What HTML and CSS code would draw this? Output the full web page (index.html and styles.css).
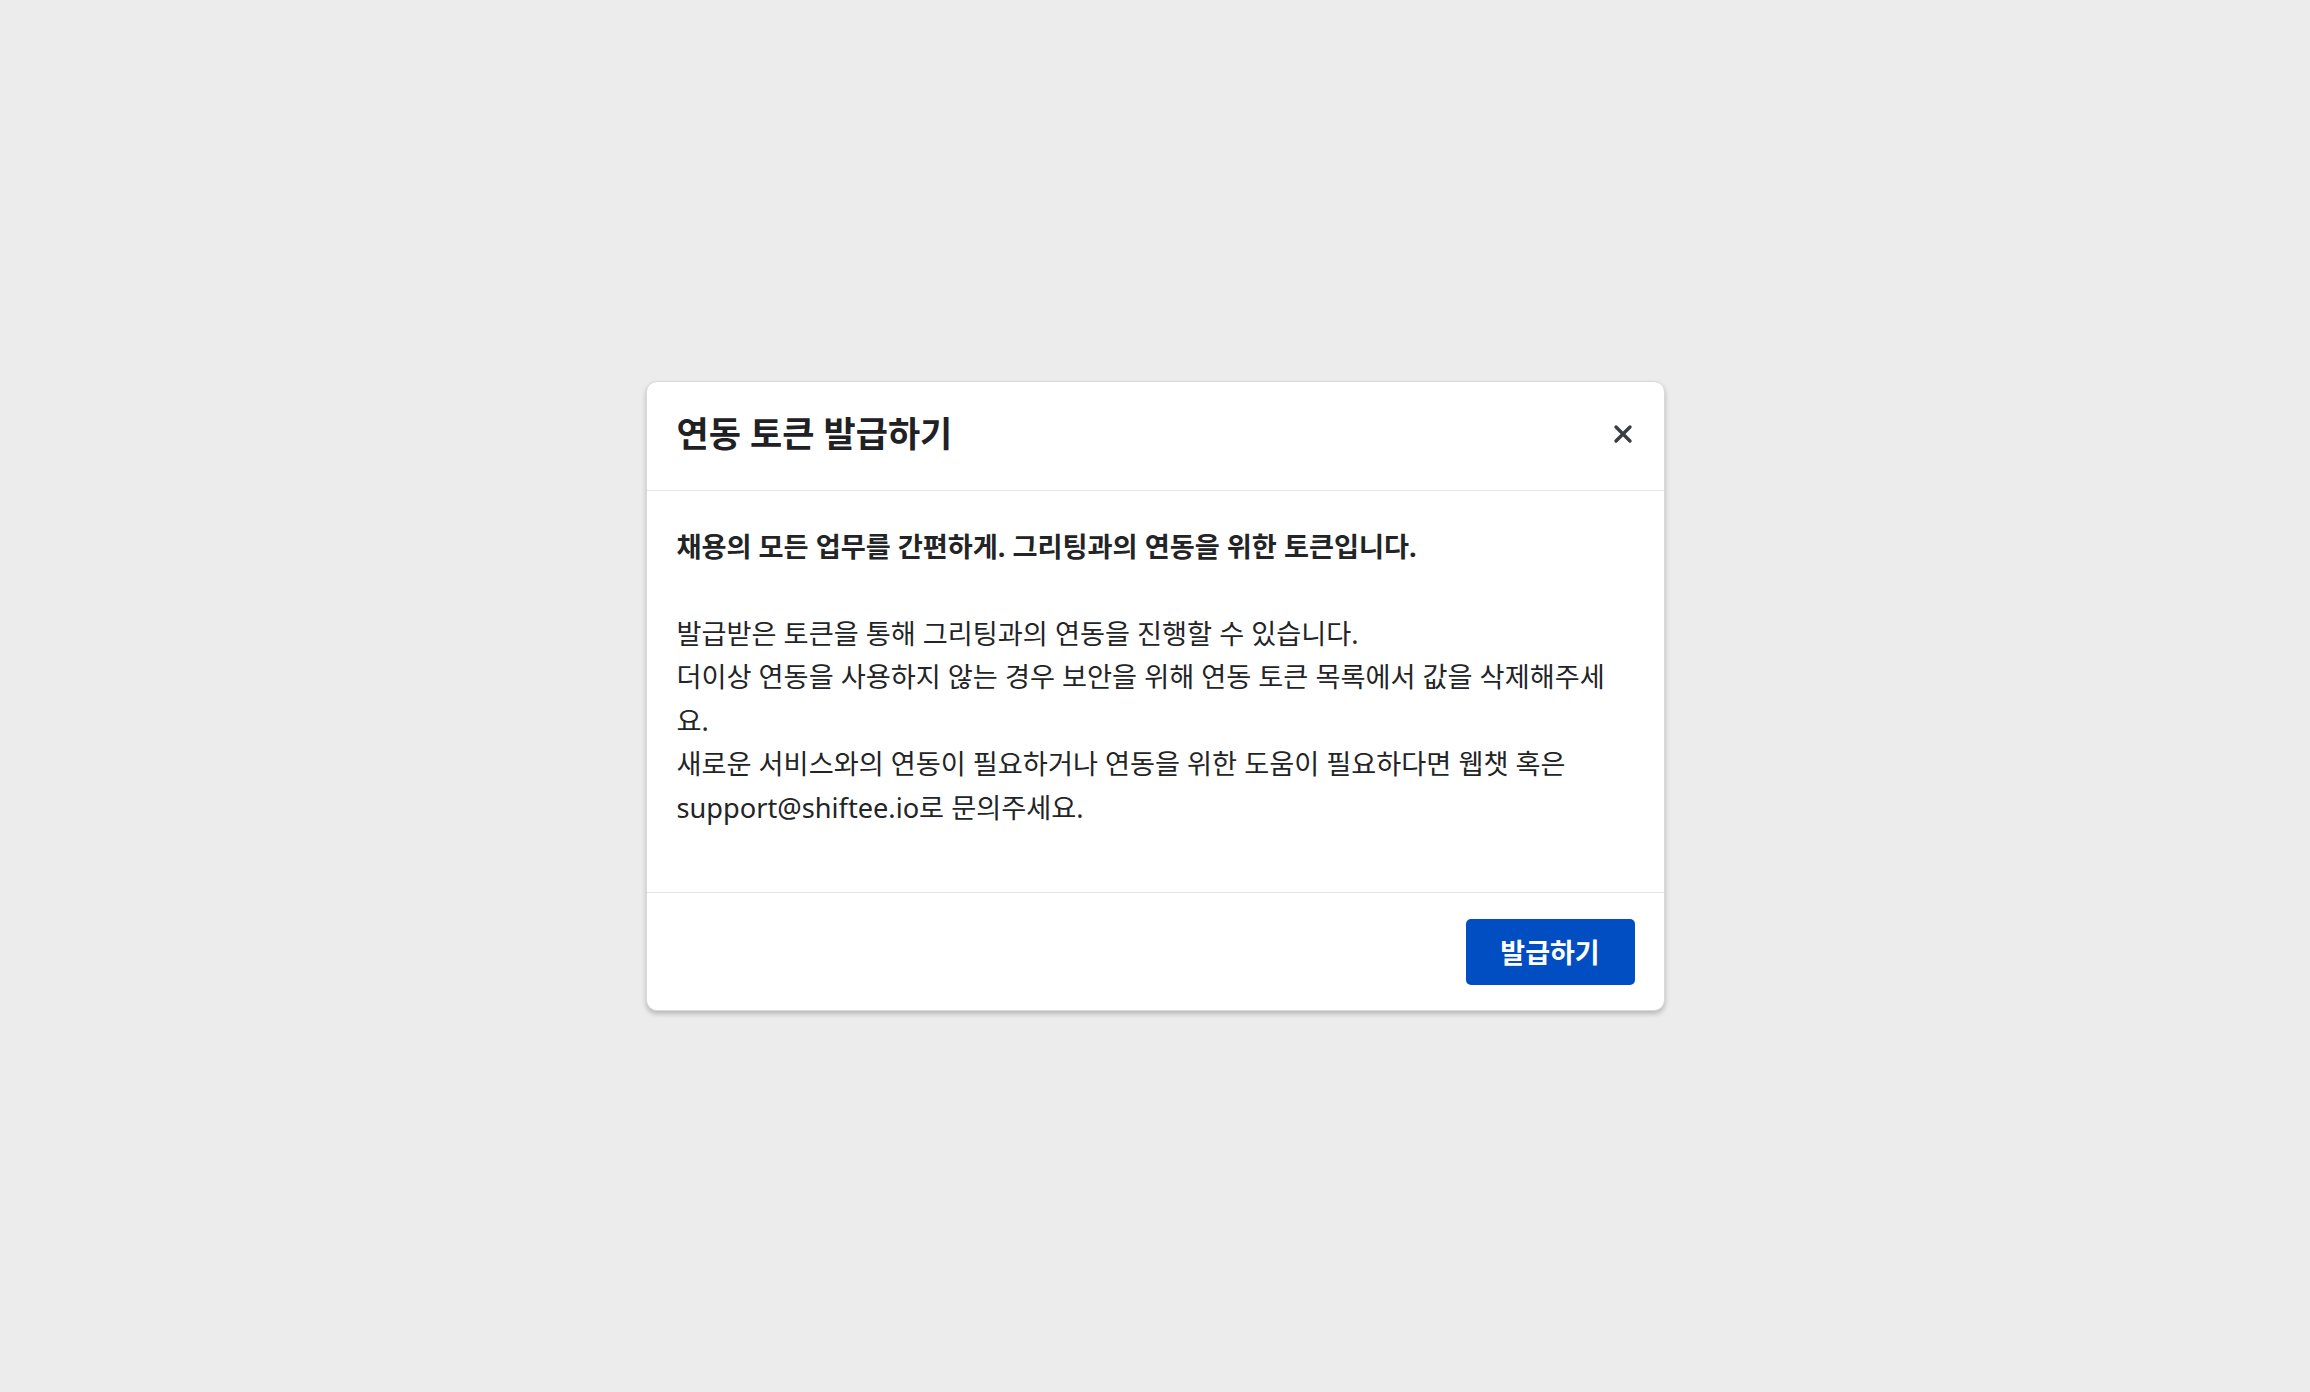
FILE: index.html
```html
<!DOCTYPE html>
<html lang="ko">
<head>
<meta charset="utf-8">
<title>연동 토큰 발급하기</title>
<link rel="stylesheet" href="styles.css">
</head>
<body>
<div class="overlay">
  <div class="modal">
    <div class="modal-header">
      <h2 class="modal-title">연동 토큰 발급하기</h2>
      <button class="close-btn" aria-label="닫기">
        <svg width="20" height="20" viewBox="0 0 20 20"><path d="M3 3 L17 17 M17 3 L3 17" stroke="#3a3d42" stroke-width="3.4" stroke-linecap="round"/></svg>
      </button>
    </div>
    <div class="modal-body">
      <p class="lead">채용의 모든 업무를 간편하게. 그리팅과의 연동을 위한 토큰입니다.</p>
      <p class="desc">발급받은 토큰을 통해 그리팅과의 연동을 진행할 수 있습니다.<br>더이상 연동을 사용하지 않는 경우 보안을 위해 연동 토큰 목록에서 값을 삭제해주세요.<br>새로운 서비스와의 연동이 필요하거나 연동을 위한 도움이 필요하다면 웹챗 혹은 support@shiftee.io로 문의주세요.</p>
    </div>
    <div class="modal-footer">
      <button class="primary-btn">발급하기</button>
    </div>
  </div>
</div>
</body>
</html>
```

FILE: styles.css
```css
html, body {
  margin: 0;
  padding: 0;
}
body {
  background: #ececec;
  font-family: "Noto Sans", "Noto Sans CJK KR", sans-serif;
  color: #222426;
}
.overlay {
  min-height: 100vh;
  display: flex;
  align-items: center;
  justify-content: center;
}
.modal {
  width: 1019px;
  box-sizing: border-box;
  background: #fff;
  border: 1px solid #d9d9d9;
  border-radius: 11px;
  box-shadow: 0 3px 5px rgba(0, 0, 0, 0.22);
  overflow: hidden;
}
.modal-header {
  height: 109px;
  box-sizing: border-box;
  padding: 0 30px 4px 30px;
  display: flex;
  align-items: center;
  justify-content: space-between;
  border-bottom: 1px solid #e2e4e8;
}
.modal-title {
  margin: 0 0 4px;
  font-family: "Noto Sans", "Noto Sans CJK KR", sans-serif;
  font-size: 35px;
  font-weight: 700;
  color: #1f2124;
}
.close-btn {
  border: 0;
  background: none;
  padding: 0;
  width: 22px;
  height: 22px;
  display: flex;
  align-items: center;
  justify-content: center;
  cursor: pointer;
}
.modal-body {
  padding: 34px 32px 63px 30px;
  border-bottom: 1px solid #e2e4e8;
  font-size: 27.2px;
  line-height: 43.5px;
}
.modal-body p {
  margin: 0;
}
.lead {
  font-weight: 700;
  margin-bottom: 43.5px !important;
}
.desc {
  font-weight: 400;
}
.modal-footer {
  height: 117px;
  box-sizing: border-box;
  padding: 0 29px;
  display: flex;
  align-items: center;
  justify-content: flex-end;
}
.primary-btn {
  width: 169px;
  height: 66px;
  border: 0;
  border-radius: 5px;
  background: #004ec2;
  color: #fff;
  font-family: "Noto Sans", "Noto Sans CJK KR", sans-serif;
  font-size: 27px;
  font-weight: 700;
  cursor: pointer;
}
```
